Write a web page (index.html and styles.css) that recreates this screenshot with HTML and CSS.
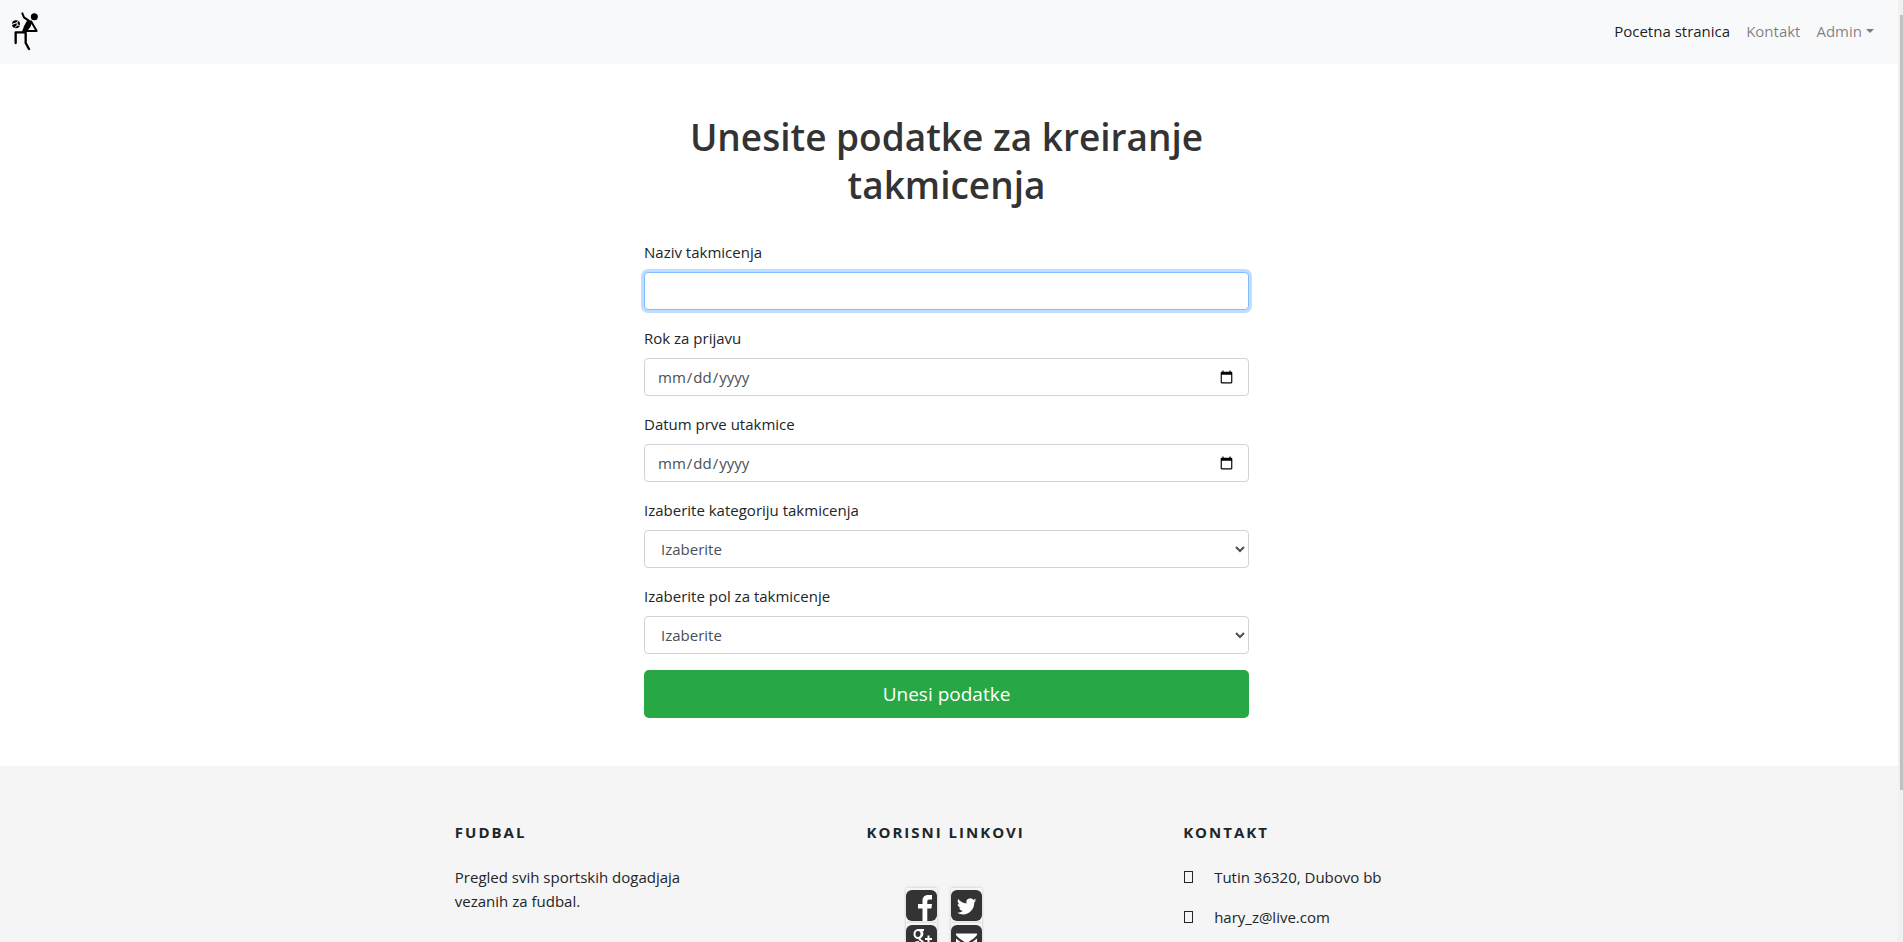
FILE: index.html
```html
<!DOCTYPE html>
<html lang="sr-Latn">
<head>
<meta charset="utf-8">
<title>Kreiranje takmicenja</title>
<link rel="stylesheet" href="styles.css">
</head>
<body>
<header class="navbar">
  <a class="brand" href="#" aria-label="Fudbal">
    <svg class="brand-logo" viewBox="15 36 120 120" fill="none" stroke="#000" stroke-width="7" stroke-linecap="round" stroke-linejoin="round" aria-hidden="true">
      <circle cx="103" cy="50" r="10.5" fill="#000" stroke="none"/>
      <path d="M67 40l5 12 14 10" stroke-width="6"/>
      <path d="M83 58l14 7-6 16-11 14H66l6-16z" fill="#000" stroke="none"/>
      <path d="M93 64l17 29H79" stroke-width="6"/>
      <path d="M74 97H47v32"/>
      <path d="M77 98v31l10 18"/>
      <circle cx="48" cy="73" r="12" fill="#000" stroke="none"/>
      <path d="M42 71l9-3 1 7-7 7M51 68l3-5M52 75l6 1M42 71l-5 2" stroke="#f8f9fb" stroke-width="3"/>
    </svg>
  </a>
  <nav class="menu">
    <a class="menu-link current" href="#">Pocetna stranica</a>
    <a class="menu-link" href="#">Kontakt</a>
    <a class="menu-link dropdown" href="#">Admin</a>
  </nav>
</header>

<main class="content">
  <form class="entry-form">
    <h1 class="title">Unesite podatke za kreiranje takmicenja</h1>
    <div class="field">
      <label for="naziv">Naziv takmicenja</label>
      <input class="control active" type="text" id="naziv">
    </div>
    <div class="field">
      <label for="rok">Rok za prijavu</label>
      <input class="control" type="date" id="rok">
    </div>
    <div class="field">
      <label for="datum">Datum prve utakmice</label>
      <input class="control" type="date" id="datum">
    </div>
    <div class="field">
      <label for="kategorija">Izaberite kategoriju takmicenja</label>
      <select class="control" id="kategorija"><option>Izaberite</option></select>
    </div>
    <div class="field">
      <label for="pol">Izaberite pol za takmicenje</label>
      <select class="control" id="pol"><option>Izaberite</option></select>
    </div>
    <button class="submit" type="submit">Unesi podatke</button>
  </form>
</main>

<footer class="footer">
  <div class="footer-columns">
    <section class="column wide">
      <h2 class="column-title">FUDBAL</h2>
      <p class="about">Pregled svih sportskih dogadjaja vezanih za fudbal.</p>
    </section>
    <section class="column narrow">
      <h2 class="column-title">KORISNI LINKOVI</h2>
      <div class="social">
        <a class="social-link" href="#" aria-label="Facebook">
          <svg viewBox="0 0 31 31" aria-hidden="true"><rect width="31" height="31" rx="6" fill="#333"/><path d="M16.500 31V18.500H12V14h4.500v-3.500C16.500 6.800 19 5 22.500 5H26v4.500h-2.500c-1.700 0-2.200.7-2.200 2.200V14H26l-.6 4.500h-4.100V31z" fill="#fff"/></svg>
        </a>
        <a class="social-link" href="#" aria-label="Twitter">
          <svg viewBox="0 0 31 31" aria-hidden="true"><rect width="31" height="31" rx="6" fill="#333"/><path d="M25.500 10.300c-.7.300-1.500.5-2.300.6.800-.5 1.400-1.300 1.700-2.200-.8.500-1.600.8-2.500 1a4 4 0 0 0-6.900 3.700c-3.400-.2-6.300-1.800-8.300-4.300-1 1.900-.5 4.100 1.300 5.400-.6 0-1.200-.2-1.800-.5 0 2 1.400 3.600 3.200 4-.6.200-1.200.2-1.800.1.500 1.600 2 2.800 3.700 2.800a8 8 0 0 1-5.900 1.700c7.900 4.900 17.600-.5 17.400-10.300.9-.5 1.600-1.200 2.200-2z" fill="#fff"/></svg>
        </a>
        <a class="social-link" href="#" aria-label="Google Plus">
          <svg viewBox="0 0 31 31" aria-hidden="true"><rect width="31" height="31" rx="6" fill="#333"/><g fill="none" stroke="#fff"><ellipse cx="12" cy="9" rx="3.500" ry="4" stroke-width="2"/><path d="M12 5h6M15 5.500c2 2 1.800 5-.3 6.500-2 1.500-1.700 2.300.3 3.500 5 3 2.500 9-3 9-7 0-7.500-7 1-7.500" stroke-width="2"/><path d="M22.500 10.500v7M19 14h7" stroke-width="2"/></g></svg>
        </a>
        <a class="social-link" href="#" aria-label="Email">
          <svg viewBox="0 0 31 31" aria-hidden="true"><rect width="31" height="31" rx="6" fill="#333"/><path d="M5 10V8.500h21V10c-2 3-6 5-8.500 7-1.500 1.200-2.500 1.200-4 0C11 15 7 13 5 10z" fill="#fff"/><path d="M5 13.500c3 2.500 6 4.500 8.500 6.500 1.500 1 2.500 1 4 0 2.500-2 5.500-4 8.500-6.500V24H5z" fill="#fff"/></svg>
        </a>
      </div>
    </section>
    <section class="column wide">
      <h2 class="column-title">KONTAKT</h2>
      <p class="contact"><span class="box"></span>Tutin 36320, Dubovo bb</p>
      <p class="contact"><span class="box"></span>hary_z@live.com</p>
    </section>
  </div>
</footer>
<div class="scrollbar" aria-hidden="true"><div class="thumb"></div></div>
</body>
</html>
```
FILE: styles.css
```css
*, *::before, *::after { box-sizing: border-box; }

body {
  margin: 0;
  padding-right: 5px;
  height: 100vh;
  overflow: hidden;
  background: #fff;
  color: #212529;
  font-family: "Open Sans", "Noto Sans", sans-serif;
  font-size: 15px;
  line-height: 24px;
}

.navbar {
  display: flex;
  align-items: center;
  justify-content: space-between;
  height: 64px;
  padding: 0 16px 0 5px;
  background: #f8f9fb;
}
.brand, .brand-logo { display: block; }
.brand-logo { width: 40px; height: 40px; }
.menu { display: flex; padding-bottom: 2px; }
.menu-link {
  padding: 8px;
  color: rgba(0, 0, 0, .5);
  text-decoration: none;
}
.menu-link.current { color: rgba(0, 0, 0, .9); }
.dropdown::after {
  content: "";
  display: inline-block;
  margin-left: 4px;
  vertical-align: 4px;
  border: 4px solid transparent;
  border-top-color: currentColor;
  border-bottom: 0;
}

.content { padding: 49px 5px 48px 0; }
.entry-form { max-width: 605px; margin: 0 auto; }
.title {
  margin: 0 0 31px;
  color: #333;
  font-size: 37px;
  font-weight: 600;
  line-height: 48px;
  text-align: center;
}
.field { margin-bottom: 16px; }
.field label { display: block; margin-bottom: 8px; }
.control {
  display: block;
  width: 100%;
  height: 38px;
  padding: 6px 12px;
  border: 1px solid #ced4da;
  border-radius: 4px;
  background: #fff;
  color: #495057;
  font: inherit;
}
.control:focus, .control.active {
  border-color: #80bdff;
  outline: 0;
  box-shadow: 0 0 0 3px rgba(0, 123, 255, .25);
}
.submit {
  display: block;
  width: 100%;
  height: 48px;
  border: 0;
  border-radius: 5px;
  background: #28a745;
  color: #fff;
  font: inherit;
  font-size: 19px;
}

.footer {
  min-height: 400px;
  padding: 54px 5px 0 0;
  background: #f5f5f5;
}
.footer-columns {
  display: flex;
  justify-content: space-around;
  max-width: 1140px;
  margin: 0 auto;
}
.column { padding: 0 15px; }
.wide { width: 285px; }
.narrow { width: 190px; }
.column-title {
  margin: 0 0 21px;
  font-size: 15px;
  font-weight: 700;
  line-height: 24px;
  letter-spacing: 2px;
  white-space: nowrap;
}
.about { margin: 0; }
.contact {
  display: flex;
  align-items: center;
  margin: 0 0 16px;
}
.box {
  width: 9px;
  height: 12px;
  margin: 0 21px 0 1px;
  border: 1px solid #212529;
}
.social {
  display: grid;
  grid-template-columns: 31px 31px;
  gap: 0 14px;
  justify-content: center;
  padding: 23px 4px 0 0;
}
.social-link {
  display: block;
  height: 35px;
  padding: 2px 0;
  box-shadow: 0 0 3px rgba(0, 0, 0, .2);
  background: #f5f5f5;
}
.social-link svg { display: block; width: 31px; height: 31px; }

.scrollbar {
  position: fixed;
  top: 0;
  right: 0;
  bottom: 0;
  width: 5px;
  padding: 15px 0 0 2px;
  background: #f1f1f1;
}
.thumb { height: 83.6%; background: #c1c1c1; }
```
